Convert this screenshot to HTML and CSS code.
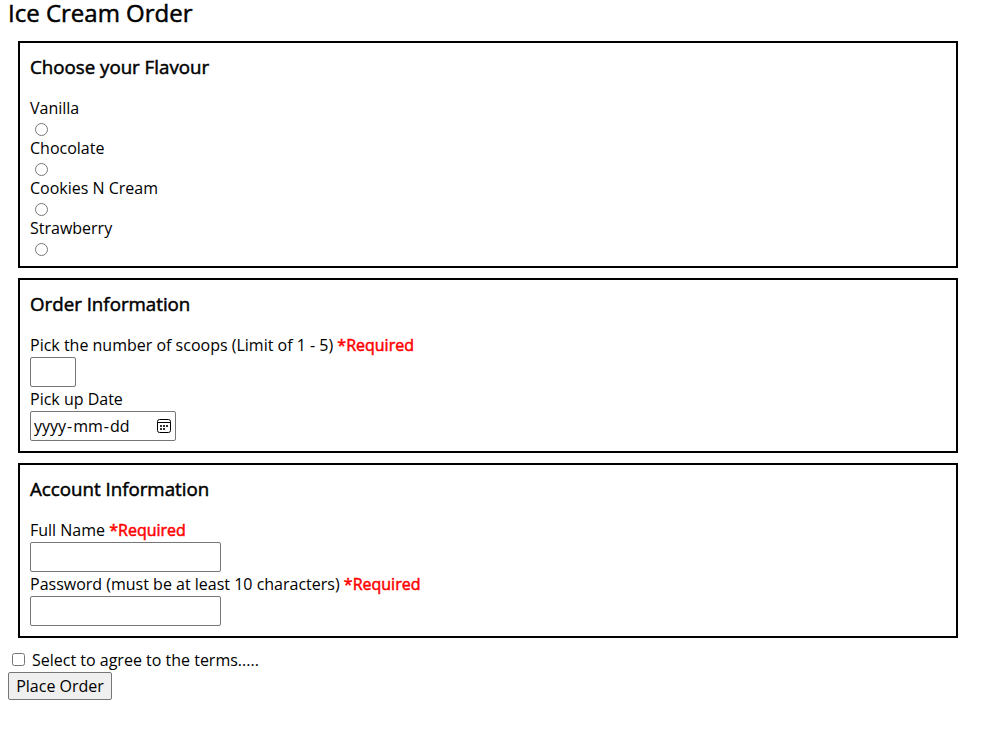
FILE: index.html
```html
<!DOCTYPE html>
<html lang="en">
<head>
<meta charset="utf-8">
<title>Ice Cream Order</title>
<link rel="stylesheet" href="styles.css">
</head>
<body>
<h1>Ice Cream Order</h1>
<form>
<section class="panel flavours">
<h2>Choose your Flavour</h2>
<label for="v">Vanilla</label><input type="radio" name="flavour" id="v">
<label for="c">Chocolate</label><input type="radio" name="flavour" id="c">
<label for="n">Cookies N Cream</label><input type="radio" name="flavour" id="n">
<label for="s">Strawberry</label><input type="radio" name="flavour" id="s">
</section>
<section class="panel">
<h2>Order Information</h2>
<label for="scoops">Pick the number of scoops (Limit of 1 - 5) <span class="required">*Required</span></label>
<input class="field scoops" type="text" id="scoops">
<label for="date">Pick up Date</label>
<div class="field date" id="date"><span>yyyy<span class="separator">-</span>mm<span class="separator">-</span>dd</span>
<svg width="16" height="16" viewBox="0 0 16 16"><rect x="1.5" y="1.5" width="13" height="13" rx="2" fill="none" stroke="#000"/><path d="M1 4.500h14" stroke="#000"/><path d="M7 7h2v2H7zM10 7h2v2h-2zM4 7h2v2H4zM4 10h2v2H4zM7 10h2v2H7z" fill="#333"/></svg></div>
</section>
<section class="panel">
<h2>Account Information</h2>
<label for="name">Full Name <span class="required">*Required</span></label>
<input class="field" type="text" id="name">
<label for="password">Password (must be at least 10 characters) <span class="required">*Required</span></label>
<input class="field" type="password" id="password">
</section>
<div class="terms"><input type="checkbox" id="terms"><label for="terms">Select to agree to the terms.....</label></div>
<button type="button">Place Order</button>
</form>
</body>
</html>
```
FILE: styles.css
```css
* { box-sizing: border-box; }
body { margin: 0 8px; font: 16px/22px "Open Sans", sans-serif; color: #000; background: #fff; }
h1, h2, .required { font-weight: 400; -webkit-text-stroke: 0.5px currentColor; }
h1 { margin: 0 0 16px; font-size: 24px; line-height: 25px; }
h2 { margin: 0 0 18px; font-size: 18.72px; line-height: 23px; }
.panel { width: 940px; margin: 0 10px 10px; padding: 12px 10px 10px; border: 2px solid #000; }
.panel label { display: block; height: 24px; line-height: 24px; }
.flavours { height: 227px; }
.flavours label { height: 22px; }
.flavours input { display: block; width: 13px; height: 13px; margin: 5px 0 0 5px; }
.required { color: #f00; }
.field { display: block; width: 191px; height: 30px; padding: 1px 2px; border: 1px solid #767676; border-radius: 2px; background: #fff; font: inherit; }
.scoops { width: 46px; }
.date { display: flex; align-items: center; justify-content: space-between; width: 146px; padding: 1px 3px; }
.separator { padding: 0 1px; }
.terms { display: flex; align-items: center; height: 22px; margin-top: 11px; }
.terms input { width: 13px; height: 13px; margin: 0 7px 2px 4px; }
button { display: block; width: 104px; height: 28px; margin: 1px 0 0; padding: 0; border: 1px solid #767676; border-radius: 2px; background: #efefef; font: inherit; color: #000; }
```
